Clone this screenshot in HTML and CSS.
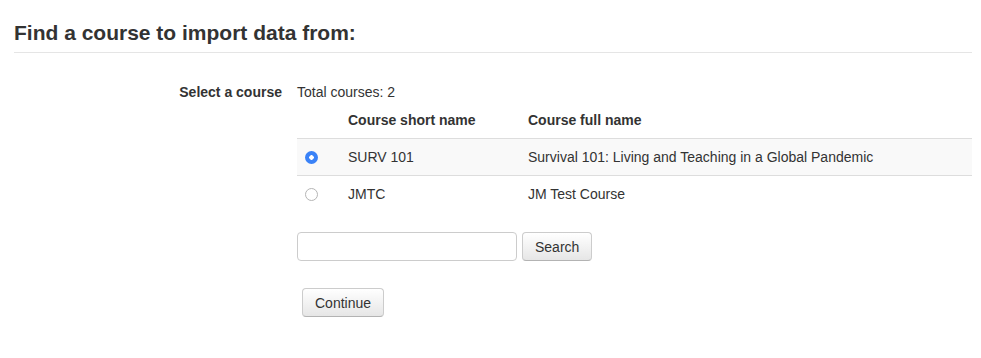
FILE: index.html
```html
<!DOCTYPE html>
<html lang="en">
<head>
    <meta charset="UTF-8">
    <title>Import course data</title>
    <link rel="stylesheet" href="styles.css">
</head>
<body>

<div class="page">
    <h2 class="section-title">Find a course to import data from:</h2>

    <div class="form-row">
        <div class="form-label">Select a course</div>
        <div class="form-field">
            <div class="total">Total courses: 2</div>
            <table class="course-table">
                <thead>
                    <tr>
                        <th class="col-radio"></th>
                        <th class="col-short">Course short name</th>
                        <th>Course full name</th>
                    </tr>
                </thead>
                <tbody>
                    <tr class="odd">
                        <td class="col-radio"><input type="radio" name="course" value="2" checked></td>
                        <td>SURV 101</td>
                        <td>Survival 101: Living and Teaching in a Global Pandemic</td>
                    </tr>
                    <tr>
                        <td class="col-radio"><input type="radio" name="course" value="3"></td>
                        <td>JMTC</td>
                        <td>JM Test Course</td>
                    </tr>
                </tbody>
            </table>

            <div class="search">
                <input type="text" class="search-input">
                <button class="btn">Search</button>
            </div>

            <div class="actions">
                <button class="btn">Continue</button>
            </div>
        </div>
    </div>
</div>

</body>
</html>
```

FILE: styles.css
```css
body {
    margin: 0;
    font-family: "Liberation Sans", Arial, sans-serif;
    font-size: 14px;
    color: #333;
    background: #fff;
}
.page {
    padding: 0 9px 0 14px;
}
.section-title {
    margin: 0;
    padding: 21px 0 8px;
    font-size: 21px;
    font-weight: bold;
    line-height: 23px;
    border-bottom: 1px solid #e5e5e5;
}
.form-row {
    display: flex;
    gap: 15px;
    margin-top: 29px;
}
.form-label {
    width: 268px;
    text-align: right;
    font-weight: bold;
    line-height: 20px;
}
.form-field {
    flex: 1;
}
.total {
    line-height: 20px;
}
.course-table {
    width: 100%;
    table-layout: fixed;
    border-collapse: collapse;
    margin-top: -1px;
}
.course-table th,
.course-table td {
    padding: 0 8px;
    height: 36px;
    text-align: left;
    vertical-align: middle;
}
.course-table th {
    font-weight: bold;
    height: 37px;
}
.course-table tbody tr {
    border-top: 1px solid #ddd;
}
.course-table tr.odd {
    background: #f9f9f9;
    border-bottom: 1px solid #ddd;
}
.course-table .col-radio {
    width: 27px;
}
.course-table .col-short {
    width: 164px;
}
.course-table input[type="radio"] {
    appearance: none;
    -webkit-appearance: none;
    display: block;
    margin: 0;
    width: 13px;
    height: 13px;
    border: 1px solid #b5b5b5;
    border-radius: 50%;
    background: #fff;
    box-sizing: border-box;
}
.course-table input[type="radio"]:checked {
    border: none;
    background: radial-gradient(circle, #fff 0 2px, #3a82f7 2.5px);
}
.search {
    display: flex;
    gap: 5px;
    margin-top: 20px;
}
.search-input {
    width: 220px;
    height: 29px;
    box-sizing: border-box;
    border: 1px solid #ccc;
    border-radius: 4px;
    padding: 4px 6px;
    font: inherit;
}
.btn {
    height: 29px;
    padding: 0 12px;
    font-family: inherit;
    font-size: 14px;
    color: #333;
    background: linear-gradient(#fff, #e6e6e6);
    border: 1px solid #ccc;
    border-bottom-color: #b3b3b3;
    border-radius: 4px;
    cursor: pointer;
}
.actions {
    margin-top: 27px;
    padding-left: 5px;
}
```
